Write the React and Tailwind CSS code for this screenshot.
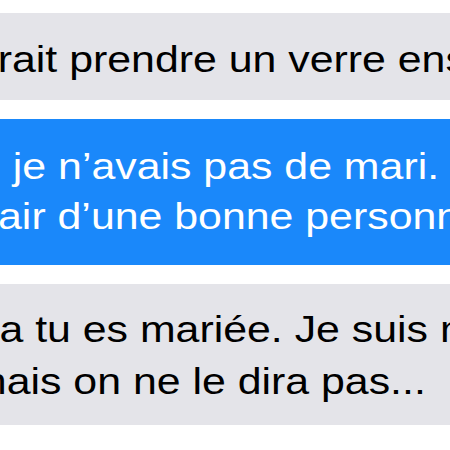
import React from 'react';

const font = { fontFamily: '"Liberation Sans", Arial, sans-serif' };

// the screenshot is a crop of a wider thread, so lines run past both edges
const Line = ({ text, offset, leading }) => (
  <div className={`origin-left scale-x-[1.19] whitespace-nowrap ${offset} ${leading}`}>{text}</div>
);

export default function App() {
  return (
    <div className="h-[450px] w-[450px] overflow-hidden bg-white pt-[13px]" style={font}>
      {/* incoming */}
      <div className="h-[87px] overflow-hidden bg-[#e4e4e9] pt-[22px] text-[36px] text-black">
        <Line text="pourrait prendre un verre ensemble ?" offset="ml-[-88px]" leading="leading-[50px]" />
      </div>

      {/* outgoing */}
      <div className="mt-[19px] h-[146px] overflow-hidden bg-[#1a88fa] pt-[23px] text-[36px] text-white">
        <Line text="si je n’avais pas de mari." offset="ml-[-30px]" leading="leading-[50px]" />
        <Line text="l’air d’une bonne personne" offset="ml-[-21px]" leading="leading-[50px]" />
      </div>

      {/* incoming */}
      <div className="mt-[19px] h-[141px] overflow-hidden bg-[#e4e4e9] pt-[20px] text-[36px] text-black">
        <Line text="ça tu es mariée. Je suis marié aussi" offset="ml-[-22px]" leading="leading-[52px]" />
        <Line text="mais on ne le dira pas..." offset="ml-[-29px]" leading="leading-[52px]" />
      </div>
    </div>
  );
}
